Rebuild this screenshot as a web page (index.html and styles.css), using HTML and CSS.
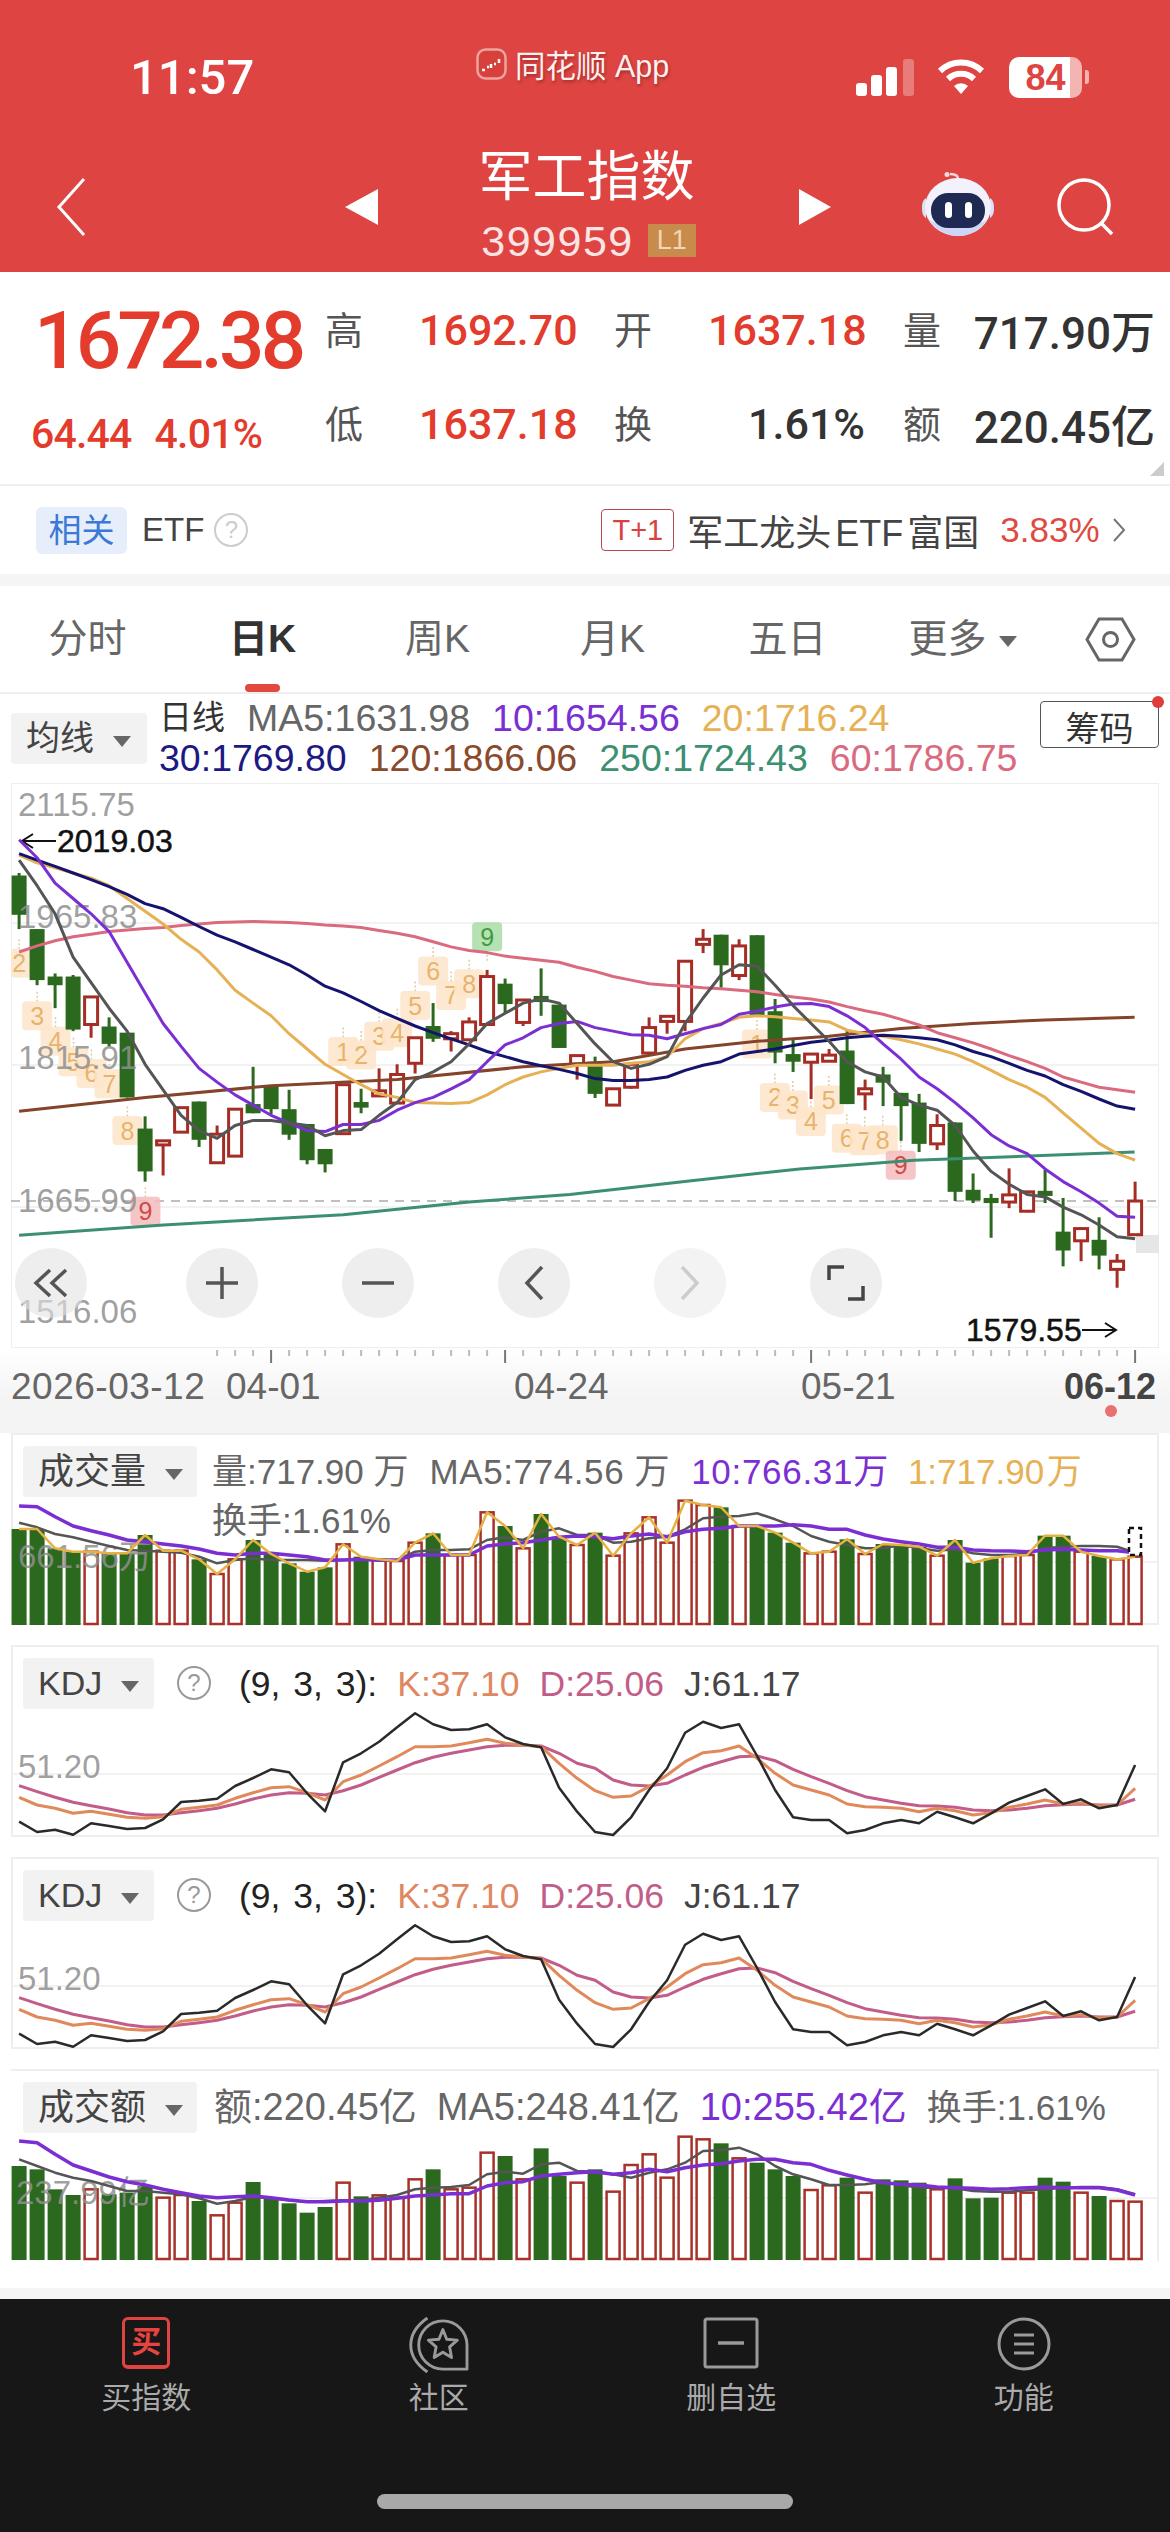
FILE: index.html
```html
<!DOCTYPE html>
<html lang="zh-CN">
<head>
  <meta charset="UTF-8">
  <title>军工指数</title>
  <meta name="viewport" content="width=device-width, initial-scale=1.0">
  <link rel="stylesheet" href="styles.css">
</head>
<body>

  <header class="top">
    <div class="status">
      <span class="time">11:57</span>
      <span class="app-logo">
        <svg width="31" height="32" viewBox="0 0 31 32"><rect x="1.500" y="1.500" width="28" height="29" rx="8" fill="#d8403c" stroke="#eda3a0" stroke-width="2.500"/><path d="M6 22h3M11 19h2M15 20v-4M18 16h2M23 15v-4" stroke="#fff" stroke-width="2.500"/></svg>
      </span>
      <span class="app-name">同花顺 App</span>
      <svg class="signal" width="58" height="37" viewBox="0 0 58 37"><rect x="0" y="24" width="11" height="13" rx="3" fill="#fff"/><rect x="15" y="16" width="11" height="21" rx="3" fill="#fff"/><rect x="30" y="8" width="11" height="29" rx="3" fill="#fff"/><rect x="47" y="0" width="11" height="37" rx="3" fill="#fff" opacity=".3"/></svg>
      <svg class="wifi" width="48" height="36" viewBox="0 0 48 36" fill="none" stroke="#fff" stroke-width="6"><path d="M3 12a30 30 0 0 1 42 0"/><path d="M11 20a19 19 0 0 1 26 0"/><path d="M24 35l-7-8a10 10 0 0 1 14 0z" fill="#fff" stroke="none"/></svg>
      <span class="battery"><span class="battery-num">84</span></span>
      <span class="battery-tip"></span>
    </div>

    <div class="nav">
      <svg class="back" width="30" height="58" viewBox="0 0 30 58" fill="none" stroke="#fff" stroke-width="3"><path d="M28 1L3 29l25 28"/></svg>
      <span class="tri tri-left"></span>
      <div class="title-box">
        <h1>军工指数</h1>
        <div class="code-row"><span class="code">399959</span><span class="level">L1</span></div>
      </div>
      <span class="tri tri-right"></span>
      <svg class="robot" width="74" height="66" viewBox="0 0 74 66">
        <path d="M37 7c0-4-4-5-8-5" fill="none" stroke="#f4dcdc" stroke-width="2.500"/>
        <circle cx="26" cy="2.500" r="2.500" fill="#f4dcdc"/>
        <path d="M1 36c0-5 1-8 4-10v20c-3-2-4-5-4-10zM73 36c0-5-1-8-4-10v20c3-2 4-5 4-10z" fill="#d8e2fa"/>
        <ellipse cx="37" cy="35" rx="33" ry="29" fill="#f3f1fb"/>
        <path d="M7 47c7 11 19 17 30 17s23-6 30-17c-7 5-18 8-30 8S14 52 7 47z" fill="#cfd5f7"/>
        <rect x="10" y="21" width="54" height="35" rx="17" fill="#1f2a52"/>
        <rect x="24" y="30" width="7" height="16" rx="3.500" fill="#fff"/>
        <rect x="44" y="30" width="7" height="16" rx="3.500" fill="#fff"/>
      </svg>
      <svg class="search" width="58" height="58" viewBox="0 0 58 58" fill="none" stroke="#fff" stroke-width="3.500"><circle cx="27" cy="27" r="25"/><path d="M45 46l10 10"/></svg>
    </div>
  </header>

  <section class="quote">
    <div class="price-box">
      <div class="price">1672.38</div>
      <div class="change"><span>64.44</span><span>4.01%</span></div>
    </div>
    <div class="quote-grid">
      <span class="q-label">高</span><span class="q-val up">1692.70</span>
      <span class="q-label">开</span><span class="q-val up">1637.18</span>
      <span class="q-label">量</span><span class="q-val wide">717.90万</span>
      <span class="q-label">低</span><span class="q-val up">1637.18</span>
      <span class="q-label">换</span><span class="q-val">1.61%</span>
      <span class="q-label">额</span><span class="q-val wide">220.45亿</span>
    </div>
    <span class="corner"></span>
  </section>

  <section class="related">
    <span class="rel-tag">相关</span>
    <span class="rel-etf">ETF</span>
    <span class="help help-light">?</span>
    <span class="t-plus">T+1</span>
    <span class="rel-name">军工龙头 ETF 富国</span>
    <span class="rel-pct">3.83%</span>
    <svg class="rel-arrow" width="13" height="24" viewBox="0 0 13 24" fill="none" stroke="#777" stroke-width="2"><path d="M1 1l10 11L1 23"/></svg>
  </section>

  <div class="band"></div>

  <nav class="tabs">
    <a class="tab">分时</a>
    <a class="tab active">日K</a>
    <a class="tab">周K</a>
    <a class="tab">月K</a>
    <a class="tab">五日</a>
    <a class="tab">更多<span class="caret caret-tab"></span></a>
    <svg class="hex" width="51" height="45" viewBox="0 0 51 45" fill="none" stroke="#666" stroke-width="3"><path d="M14 2h23l12 20.500L37 43H14L2 22.500z"/><circle cx="25.500" cy="22.500" r="7"/></svg>
  </nav>

  <section class="ma-head">
    <div class="tag tag-ma">均线<span class="caret"></span></div>
    <div class="ma-lines">
      <div class="ma-line">
        <span class="c-dark ma-title">日线</span><span class="c-grey">MA5:1631.98</span><span class="c-purple">10:1654.56</span><span class="c-yellow">20:1716.24</span>
      </div>
      <div class="ma-line">
        <span class="c-navy">30:1769.80</span><span class="c-brown">120:1866.06</span><span class="c-green">250:1724.43</span><span class="c-pink">60:1786.75</span>
      </div>
    </div>
    <button class="chips">筹码<span class="chips-dot"></span></button>
  </section>

  <section class="main-chart">
    <svg id="candleChart" class="chart-svg" viewBox="11 783 1148 565"></svg>
    <div class="zoom-row">
      <span class="zoom-btn first">
        <svg width="36" height="30" viewBox="0 0 36 30" fill="none" stroke="#555" stroke-width="3.500"><path d="M17 2L3 15l14 13M33 2L19 15l14 13"/></svg>
      </span>
      <span class="zoom-btn">
        <svg width="34" height="34" viewBox="0 0 34 34" fill="none" stroke="#555" stroke-width="3.500"><path d="M17 1v32M1 17h32"/></svg>
      </span>
      <span class="zoom-btn">
        <svg width="34" height="34" viewBox="0 0 34 34" fill="none" stroke="#555" stroke-width="3.500"><path d="M1 17h32"/></svg>
      </span>
      <span class="zoom-btn">
        <svg width="20" height="36" viewBox="0 0 20 36" fill="none" stroke="#555" stroke-width="3.500"><path d="M18 2L3 18l15 16"/></svg>
      </span>
      <span class="zoom-btn off">
        <svg width="20" height="36" viewBox="0 0 20 36" fill="none" stroke="#ccc" stroke-width="3.500"><path d="M2 2l15 16L2 34"/></svg>
      </span>
      <span class="zoom-btn">
        <svg width="38" height="36" viewBox="0 0 38 36" fill="none" stroke="#444" stroke-width="3.500"><path d="M2 15V2h15M36 21v13H21"/></svg>
      </span>
    </div>
  </section>

  <svg id="dateAxis" class="date-axis" viewBox="0 1348 1170 85"></svg>

  <section class="panel">
    <svg id="volChart" class="chart-svg" viewBox="11 1433 1148 192"></svg>
    <div class="panel-head">
      <div class="tag tag-vol">成交量<span class="caret"></span></div>
      <div class="head-text">
        <div class="head-line">
          <span class="c-grey">量:717.90 万</span><span class="c-grey spread-s">MA5:774.56 万</span><span class="c-purple spread-l">10:766.31万</span><span class="c-yellow close-up">1:717.90 万</span>
        </div>
        <div class="head-line"><span class="c-grey">换手:1.61%</span></div>
      </div>
    </div>
  </section>

  <section class="panel">
    <svg id="kdjChart1" class="chart-svg" viewBox="11 1645 1148 192"></svg>
    <div class="panel-head">
      <div class="tag tag-kdj">KDJ<span class="caret"></span></div>
      <span class="help">?</span>
      <div class="head-line kdj-line">
        <span class="c-black kdj-args">(9, 3, 3):</span><span class="c-k">K:37.10</span><span class="c-d">D:25.06</span><span class="c-j">J:61.17</span>
      </div>
    </div>
  </section>

  <section class="panel">
    <svg id="kdjChart2" class="chart-svg" viewBox="11 1645 1148 192"></svg>
    <div class="panel-head">
      <div class="tag tag-kdj">KDJ<span class="caret"></span></div>
      <span class="help">?</span>
      <div class="head-line kdj-line">
        <span class="c-black kdj-args">(9, 3, 3):</span><span class="c-k">K:37.10</span><span class="c-d">D:25.06</span><span class="c-j">J:61.17</span>
      </div>
    </div>
  </section>

  <section class="panel last-panel">
    <svg id="amtChart" class="chart-svg" viewBox="11 2068 1148 192"></svg>
    <div class="panel-head">
      <div class="tag tag-vol">成交额<span class="caret"></span></div>
      <div class="head-line amt-line">
        <span class="c-grey">额:220.45亿</span><span class="c-grey">MA5:248.41亿</span><span class="c-purple">10:255.42亿</span><span class="c-grey amt-turn">换手:1.61%</span>
      </div>
    </div>
  </section>

  <div class="band band-foot"></div>

  <footer class="bottom">
    <div class="bottom-tabs">
      <div class="b-item">
        <span class="buy-icon">买</span>
        <span>买指数</span>
      </div>
      <div class="b-item">
        <svg width="60" height="58" viewBox="0 0 60 58" fill="none" stroke="#9a9a9a" stroke-width="3"><path d="M18 1C-5 17-5 41 18 57"/><path d="M34 54A25 25 0 1 1 59 29V54Z" stroke-linejoin="round"/><path d="M34 13l4 10 11 1-8 7 2 11-9-5.500-9 5.500 2-11-8-7 11-1z" stroke-linejoin="round"/></svg>
        <span>社区</span>
      </div>
      <div class="b-item">
        <svg width="56" height="52" viewBox="0 0 56 52" fill="none" stroke="#9a9a9a" stroke-width="3"><rect x="2" y="2" width="52" height="48" rx="2"/><path d="M15 26h26" stroke-width="3.500"/></svg>
        <span>删自选</span>
      </div>
      <div class="b-item">
        <svg width="54" height="54" viewBox="0 0 54 54" fill="none" stroke="#9a9a9a" stroke-width="3"><circle cx="27" cy="27" r="25"/><path d="M17 18h20M17 27h20M17 36h20"/></svg>
        <span>功能</span>
      </div>
    </div>
    <div class="home-bar"></div>
  </footer>

  <script src="script.js"></script>
</body>
</html>
```

FILE: styles.css
```css
* { box-sizing: border-box; margin: 0; padding: 0; }

body {
  width: 1170px;
  height: 2532px;
  overflow: hidden;
  background: #fff;
  color: #333;
  font-family: "Liberation Sans", "Noto Sans CJK SC", sans-serif;
}

/* red header */
.top { height: 272px; background: #dd4442; color: #fff; }

.status {
  height: 145px;
  padding: 9px 0 0 130px;
  display: flex;
  align-items: center;
}

.time { font-family: Roboto, sans-serif; font-size: 49px; font-weight: 500; width: 346px; }
.app-logo { display: flex; margin-bottom: 26px; }
.app-name {
  font-size: 30.500px;
  width: 341px;
  margin: 0 0 26px 8px;
  color: #fdf0ef;
  white-space: nowrap;
  text-shadow: 1px 2px 3px rgba(90, 20, 20, .45);
}
.wifi { margin-left: 23px; }
.battery {
  width: 73px;
  height: 41px;
  margin-left: 24px;
  background: linear-gradient(90deg, #fff 84%, #f3b4b2 84%);
  border-radius: 10px;
  text-align: center;
}
.battery-num { color: #dd4442; font-size: 36px; font-weight: bold; line-height: 41px; }
.battery-tip { width: 4px; height: 14px; margin-left: 3px; background: #f3b4b2; border-radius: 0 3px 3px 0; }

.nav { height: 127px; padding: 0 0 4px 56px; display: flex; align-items: center; }
.tri { width: 0; height: 0; border-top: 18px solid transparent; border-bottom: 18px solid transparent; }
.tri-left { margin-left: 259px; border-right: 33px solid #fff; }
.tri-right { border-left: 32px solid #fff; }
.title-box { width: 421px; text-align: center; margin-top: -9px; }
h1 { font-size: 54px; font-weight: 400; line-height: 68px; margin-left: -4px; }
.code-row { display: flex; justify-content: center; align-items: center; margin-top: 9px; }
.code { font-size: 43px; line-height: 42px; letter-spacing: 1.500px; color: #fbe4e3; }
.level {
  margin-left: 14px;
  width: 48px;
  height: 33px;
  background: #c98b4c;
  color: #f0d7b8;
  font-size: 27px;
  line-height: 33px;
  text-align: center;
}
.robot { margin-left: 90px; margin-top: -3px; }
.search { margin-left: 62px; }

/* quote block */
.quote { position: relative; height: 212px; display: flex; }
.price-box { width: 326px; padding: 27px 0 0 31px; color: #e33b2c; }
.price {
  font-family: Roboto, sans-serif;
  font-size: 80px;
  font-weight: 500;
  line-height: 84px;
  letter-spacing: -3.800px;
  padding-left: 3px;
}
.change {
  display: flex;
  gap: 23px;
  margin-top: 26px;
  font-family: Roboto, sans-serif;
  font-size: 41px;
  line-height: 50px;
  font-weight: 500;
  letter-spacing: -.8px;
}
.quote-grid {
  padding-top: 11px;
  display: grid;
  grid-template-columns: 95px 194px 95px 194px 69px 179px;
  grid-auto-rows: 94px;
  align-items: center;
}
.q-label { font-size: 38px; color: #555; margin: -6px 0 0 -1px; }
.q-val {
  font-family: Roboto, "Noto Sans CJK SC", sans-serif;
  font-size: 43px;
  font-weight: 500;
  color: #333;
  width: 155px;
  text-align: right;
}
.q-val.up { color: #e33b2c; text-align: left; margin-left: -2px; }
.q-val.wide { width: 183px; margin-left: -1px; font-size: 44px; white-space: nowrap; }
.corner {
  position: absolute;
  right: 6px;
  bottom: 8px;
  border-left: 14px solid transparent;
  border-bottom: 14px solid #ccc;
}

/* related row */
.related {
  height: 90px;
  padding-left: 36px;
  border-top: 2px solid #eee;
  display: flex;
  align-items: center;
}
.rel-tag {
  width: 91px;
  height: 47px;
  background: #e7eefb;
  color: #3b78d8;
  border-radius: 6px;
  font-size: 33px;
  line-height: 47px;
  text-align: center;
}
.rel-etf { margin-left: 15px; font-size: 33px; color: #444; }
.help {
  width: 34px;
  height: 34px;
  border: 2px solid #999;
  border-radius: 50%;
  color: #999;
  font-size: 24px;
  line-height: 30px;
  text-align: center;
}
.help-light { margin-left: 10px; border-color: #ccc; color: #ccc; }
.t-plus {
  margin-left: 353px;
  width: 73px;
  height: 42px;
  border: 1px solid #b5494d;
  border-radius: 4px;
  color: #d9433f;
  font-size: 29px;
  line-height: 40px;
  text-align: center;
}
.rel-name { margin-left: 13px; font-size: 36px; color: #444; white-space: nowrap; word-spacing: -6px; }
.rel-pct { margin-left: 21px; font-size: 35px; color: #e04a3f; }
.rel-arrow { margin-left: 13px; }

.band { height: 12px; background: #f5f5f5; }

/* period tabs */
.tabs { height: 108px; border-bottom: 2px solid #eee; display: flex; align-items: center; }
.tab {
  position: relative;
  width: 175px;
  height: 106px;
  line-height: 106px;
  text-align: center;
  font-size: 39px;
  color: #666;
}
.tab.active { color: #333; font-weight: bold; }
.tab.active::after {
  content: "";
  position: absolute;
  left: 70px;
  bottom: 0;
  width: 35px;
  height: 8px;
  background: #e04a3f;
  border-radius: 4px;
}
.hex { margin-left: 35px; }

.caret {
  display: inline-block;
  margin-left: 19px;
  border-left: 9px solid transparent;
  border-right: 9px solid transparent;
  border-top: 11px solid #666;
  vertical-align: middle;
}
.caret-tab { margin-left: 12px; }

/* moving average legend */
.ma-head { height: 89px; padding: 0 11px; display: flex; }
.tag {
  flex: none;
  height: 51px;
  background: #f2f2f2;
  border-radius: 4px;
  white-space: nowrap;
  line-height: 51px;
  color: #444;
  font-size: 34px;
}
.tag-ma { width: 136px; margin-top: 19px; padding-left: 15px; }
.tag-vol { width: 174px; padding-left: 15px; font-size: 36px; }
.tag-kdj { width: 131px; padding-left: 15px; }
.ma-lines { margin: 4px 0 0 12px; }
.ma-line { display: flex; gap: 22px; font-size: 37.500px; line-height: 40px; white-space: nowrap; }
.ma-title { font-size: 33px; }

.c-dark { color: #333; }
.c-black { color: #222; }
.c-grey { color: #666; }
.c-purple { color: #7b2fd3; }
.c-yellow { color: #e6b155; }
.c-navy { color: #1c1a82; }
.c-brown { color: #8a4a2c; }
.c-green { color: #3d8f72; }
.c-pink { color: #da6b7f; }
.c-k { color: #df8760; }
.c-d { color: #c25c88; }
.c-j { color: #444; }

.chips {
  position: relative;
  margin: 7px 0 0 auto;
  flex: none;
  width: 119px;
  height: 47px;
  background: #fff;
  border: 1px solid #555;
  border-radius: 4px;
  font-family: inherit;
  font-size: 34px;
  color: #333;
}
.chips-dot {
  position: absolute;
  top: -6px;
  right: -6px;
  width: 12px;
  height: 12px;
  background: #e03c3c;
  border-radius: 50%;
}

/* charts */
.main-chart {
  position: relative;
  margin: 0 11px;
  height: 565px;
  box-shadow: inset 0 0 0 1px #eee;
}
.chart-svg { position: absolute; left: 0; top: 0; width: 100%; height: 100%; overflow: visible; }
.zoom-row { position: absolute; left: 4px; top: 465px; display: flex; gap: 84px; }
.zoom-btn {
  width: 72px;
  height: 70px;
  background: rgba(226, 226, 226, .6);
  border-radius: 50%;
  display: flex;
  align-items: center;
  justify-content: center;
}
.zoom-btn.first { margin-right: 15px; }
.zoom-btn.off { background: rgba(235, 235, 235, .6); }

.date-axis { display: block; width: 1170px; height: 85px; background: linear-gradient(#fff, #f4f4f4 60%); }

.axis-label { font-size: 33px; fill: #8f8f8f; fill-opacity: .85; }
.axis-mark { font-size: 32px; fill: #111; stroke: #111; stroke-width: .5px; }
.date-label { font-size: 37px; fill: #666; }
.date-label.first { letter-spacing: .5px; }
.date-label.now { fill: #444; font-weight: bold; font-size: 36px; }
.pin-num { font-size: 25px; text-anchor: middle; }

.panel {
  position: relative;
  margin: 0 11px 20px;
  height: 192px;
  box-shadow: inset 0 0 0 2px #eee;
}
.panel.last-panel { margin-bottom: 27px; box-shadow: inset 0 2px 0 #eee, inset -2px 0 0 #eee; }
.panel-head { position: relative; padding: 13px 0 0 12px; display: flex; align-items: flex-start; }
.head-text { margin: 1px 0 0 15px; }
.head-line { display: flex; gap: 21px; font-size: 35px; line-height: 49px; white-space: nowrap; }
.spread-s { letter-spacing: .6px; }
.spread-l { letter-spacing: .7px; }
.close-up { word-spacing: -7px; margin-left: -2px; }
.panel-head .help { margin: 8px 0 0 23px; }
.kdj-line { margin: 2px 0 0 28px; font-size: 35.500px; gap: 20px; }
.kdj-args { word-spacing: 3px; }
.amt-line { margin: 1px 0 0 17px; font-size: 38px; gap: 20px; }
.amt-turn { font-size: 35px; }

.band-foot { height: 11px; }

/* bottom bar */
.bottom { height: 234px; background: #171717; color: #aaa; }
.bottom-tabs { height: 195px; padding-top: 18px; display: grid; grid-template-columns: repeat(4, 1fr); }
.b-item {
  height: 100px;
  display: flex;
  flex-direction: column;
  align-items: center;
  justify-content: space-between;
  font-size: 30px;
}
.buy-icon {
  width: 48px;
  height: 52px;
  border: 3px solid #dd4442;
  border-bottom-width: 4px;
  border-radius: 6px;
  color: #e8443f;
  font-size: 30px;
  font-weight: bold;
  line-height: 44px;
  text-align: center;
}
.home-bar { width: 416px; height: 15px; margin: 0 auto; background: #a9a9a9; border-radius: 8px; }
```

FILE: script.js
```js
// all coordinates are page pixels; the zoom arrays below were read at x*2.613, y*1.96
var mx = function (v) { return v * 600 / 1568; };
var my = function (v) { return 600 + v * 800 / 1568; };
var cx = function (i) { return 19.1 + 18 * i; };

var UP = "#a52d25", DOWN = "#2b691f";

// [body top, body bottom, wick top, wick bottom, colour]
var candles = [
  [540,617,535,645,"g"],[645,745,645,755,"g"],[738,755,732,800,"g"],[738,842,735,845,"g"],[778,832,778,858,"r"],
  [836,870,818,875,"g"],[848,975,848,975,"g"],[1036,1120,1012,1140,"g"],[1060,1068,1060,1128,"r"],[995,1043,995,1043,"r"],
  [983,1058,983,1072,"g"],[1047,1103,1030,1103,"r"],[998,1090,998,1090,"r"],[988,1006,915,1006,"g"],[952,998,952,1008,"g"],
  [998,1048,960,1058,"g"],[1027,1098,1027,1106,"g"],[1076,1106,1076,1122,"g"],[950,1046,950,1046,"r"],[984,995,958,1006,"g"],
  [962,972,918,972,"r"],[930,986,910,986,"r"],[858,908,858,928,"r"],[835,860,790,866,"g"],[850,860,845,885,"r"],
  [827,862,818,862,"r"],[738,832,725,832,"r"],[752,792,742,810,"g"],[784,828,784,835,"r"],[776,788,722,815,"g"],
  [793,878,793,878,"g"],[893,910,893,940,"r"],[905,968,895,976,"g"],[958,990,958,990,"r"],[910,955,910,958,"r"],
  [838,888,818,888,"r"],[816,826,816,850,"r"],[708,826,708,845,"r"],[665,675,645,692,"r"],[656,716,656,760,"g"],
  [678,736,665,745,"r"],[657,815,657,815,"g"],[806,887,782,908,"g"],[890,905,860,925,"g"],[890,906,890,978,"r"],
  [892,904,880,904,"r"],[883,988,845,988,"g"],[958,968,940,1000,"r"],[930,946,915,992,"g"],[966,992,966,1060,"g"],
  [985,1066,968,1082,"g"],[1030,1066,1008,1078,"r"],[1024,1160,1024,1178,"g"],[1156,1177,1124,1182,"g"],[1172,1182,1164,1250,"g"],
  [1166,1180,1114,1192,"r"],[1160,1198,1160,1200,"r"],[1158,1168,1116,1182,"g"],[1238,1275,1172,1306,"g"],[1232,1256,1232,1296,"r"],
  [1254,1285,1210,1312,"g"],[1296,1312,1282,1348,"r"],[1178,1244,1140,1244,"r"]
];

var maGrey = [510,560,615,700,750,800,845,910,960,1010,1040,1055,1030,1020,1020,1025,1030,1050,1040,1038,1010,985,940,925,905,870,830,810,790,782,790,830,870,905,918,910,895,830,780,735,715,718,755,795,830,865,905,925,935,975,990,1000,1030,1080,1120,1145,1165,1170,1190,1205,1225,1248,1252];
var maPurple = [470,505,555,585,615,650,710,770,830,875,918,945,970,990,1010,1025,1040,1042,1028,1028,1020,1000,985,975,958,940,905,872,858,838,830,826,838,845,852,853,860,850,840,832,812,806,798,792,791,797,815,838,870,900,935,958,985,1015,1048,1070,1085,1115,1140,1160,1182,1208,1210];
var maYellow = [500,515,525,535,545,560,585,610,635,665,690,725,765,790,815,850,880,910,930,950,968,975,985,986,987,985,970,950,935,925,918,912,912,912,908,905,895,860,840,830,818,815,817,820,823,827,843,850,855,862,870,880,890,905,922,940,955,975,1005,1035,1065,1085,1098];
var maNavy = [497,510,522,535,548,562,577,595,605,622,640,657,670,685,700,715,735,757,770,787,805,820,835,848,860,872,885,895,905,913,920,928,938,942,942,940,935,922,912,905,890,885,880,873,867,863,858,855,853,855,858,862,872,885,895,908,922,933,950,963,978,992,998];
var maPink = [690,678,668,660,655,650,647,644,642,638,635,632,631,630,631,632,634,637,639,642,648,653,660,670,680,687,691,698,702,706,710,720,728,738,745,752,755,757,760,762,765,768,773,778,782,788,797,805,812,822,833,848,858,868,880,893,905,918,935,945,955,960,965];
// the two slow averages are nearly straight: [x, y] anchors
var maBrown = [[50,1002],[380,975],[709,952],[1038,940],[1367,915],[1602,905],[1790,880],[1978,865],[2166,855],[2354,840],[2542,830],[2730,823],[2965,818]];
var maGreen = [[50,1245],[427,1225],[897,1205],[1226,1180],[1489,1165],[1789,1140],[2089,1115],[2389,1098],[2689,1090],[2965,1082]];

// [x, y, number, kind]
var pins = [
  [50,712,2,"o"],[97,815,3,"o"],[145,865,4,"o"],[192,905,5,"o"],[239,928,6,"o"],[286,948,7,"o"],[333,1040,8,"o"],[380,1198,9,"r"],
  [897,885,1,"o"],[944,892,2,"o"],[991,855,3,"o"],[1038,848,4,"o"],[1085,795,5,"o"],[1132,727,6,"o"],[1179,775,7,"o"],[1226,752,8,"o"],[1273,660,9,"g"],
  [1978,870,1,"o"],[2025,975,2,"o"],[2072,990,3,"o"],[2119,1022,4,"o"],[2166,980,5,"o"],[2213,1055,6,"o"],[2260,1060,7,"o"],[2307,1058,8,"o"],[2354,1108,9,"r"]
];
var pinStyle = {
  o: ["#fde5ca", "#e9b36c"],
  r: ["#f5bcbc", "#cf4a4a"],
  g: ["#a9dca6", "#3f9a45"]
};

// bars: top edge read at y*3, page y = base + top/3
var volTops = [387,387,445,455,455,460,460,405,452,452,478,522,478,420,462,490,515,502,433,470,478,483,428,400,465,465,337,378,445,342,410,435,398,467,400,352,428,302,315,322,378,378,398,428,460,455,418,462,432,435,440,467,420,488,475,468,465,407,407,455,468,478,470];
var volPurple = [318,320,350,378,392,405,420,425,432,438,447,460,465,460,460,465,470,480,480,478,480,480,465,465,465,465,438,432,428,420,412,408,410,416,408,402,410,395,388,385,378,378,378,374,378,388,388,405,417,425,432,442,442,450,452,453,455,450,448,450,452,452,458];
var volGrey = [368,382,402,412,425,438,450,452,455,458,470,490,480,475,480,480,480,482,480,478,482,480,455,450,450,448,420,412,420,395,385,405,405,428,425,415,410,388,355,350,348,340,358,378,408,425,435,445,445,435,445,452,448,460,465,465,462,445,440,438,438,440,458];

var amtTops = [375,385,445,462,445,460,455,435,470,462,480,523,485,423,470,487,515,498,425,466,463,470,415,385,445,440,335,345,415,322,405,425,385,452,372,340,410,287,295,307,352,365,385,405,447,433,410,455,415,418,425,445,412,472,470,455,455,410,422,455,465,480,482];
var amtPurple = [300,305,340,372,390,408,422,432,445,455,465,470,467,465,470,477,482,482,480,480,478,472,465,462,458,458,435,425,422,405,400,395,392,400,395,385,392,380,372,368,360,355,355,365,370,388,402,415,425,430,432,438,440,442,445,443,440,438,440,440,440,447,462];
var amtGrey = [355,375,395,410,420,435,450,450,455,460,472,488,480,468,472,478,482,480,478,478,470,462,445,440,438,432,400,392,398,370,365,390,392,400,410,395,385,365,330,328,320,340,375,400,415,432,432,430,422,432,440,440,442,450,452,452,448,445,440,438,438,445,460];

var kdjJ = [1265,1296,1289,1304,1270,1278,1287,1284,1258,1206,1202,1196,1158,1134,1108,1117,1180,1234,1087,1060,1025,982,940,973,990,988,973,1012,1032,1042,1163,1235,1296,1305,1252,1170,1105,998,965,984,973,1068,1170,1252,1260,1260,1300,1290,1270,1260,1270,1235,1252,1270,1240,1208,1188,1168,1212,1198,1225,1215,1095];
var kdjK = [1192,1215,1225,1240,1234,1243,1252,1255,1250,1228,1222,1215,1195,1178,1163,1160,1178,1200,1145,1125,1098,1070,1040,1040,1038,1028,1018,1030,1035,1040,1090,1135,1172,1192,1188,1160,1125,1085,1058,1052,1038,1075,1120,1155,1170,1185,1212,1220,1222,1225,1235,1225,1232,1245,1238,1222,1212,1200,1212,1208,1218,1215,1165];
var kdjD = [1157,1175,1192,1207,1217,1227,1238,1245,1245,1238,1232,1225,1212,1197,1185,1178,1180,1185,1172,1155,1132,1110,1088,1072,1060,1050,1040,1036,1036,1038,1060,1090,1105,1140,1155,1158,1150,1125,1102,1085,1070,1068,1082,1108,1130,1150,1172,1190,1200,1210,1217,1218,1222,1230,1232,1230,1225,1217,1214,1212,1215,1215,1198];

function polyline(points, colour, width) {
  return '<polyline fill="none" stroke-linejoin="round" stroke="' + colour + '" stroke-width="' + width + '" points="' + points.join(" ") + '"/>';
}

function series(values, toY, colour, width) {
  var pts = values.map(function (v, i) { return cx(i) + "," + toY(v).toFixed(1); });
  return polyline(pts, colour, width);
}

function hline(y, colour, x1, x2, dash) {
  return '<line x1="' + x1 + '" x2="' + x2 + '" y1="' + y + '" y2="' + y + '" stroke="' + colour + '" stroke-width="1.500"' + (dash ? ' stroke-dasharray="' + dash + '"' : "") + '/>';
}

function label(x, y, text, cls) {
  return '<text x="' + x + '" y="' + y + '" class="' + cls + '">' + text + '</text>';
}

function drawMain() {
  var out = "";
  [923, 1065, 1207].forEach(function (y) { out += hline(y, "#eee", 11, 1159); });
  out += hline(1201, "#aaa", 11, 1159, "9 7");

  out += '<rect x="1136" y="1235" width="23" height="18" fill="#e6e6e6"/>';

  pins.forEach(function (p) {
    var x = mx(p[0]), y = my(p[1]), st = pinStyle[p[3]];
    var rx = Math.max(x - 15, 11);
    var stemTop = p[3] === "g" ? y + 14 : y - 24;
    out += '<line x1="' + x + '" x2="' + x + '" y1="' + stemTop + '" y2="' + (stemTop + 10) + '" stroke="#e2c9a8" stroke-width="1.500" stroke-dasharray="2 2"/>';
    out += '<rect x="' + rx + '" y="' + (y - 14.5) + '" width="' + (x + 15 - rx) + '" height="29" rx="4" fill="' + st[0] + '" opacity=".85"/>';
    out += '<text x="' + x + '" y="' + (y + 9) + '" class="pin-num" fill="' + st[1] + '">' + p[2] + '</text>';
  });

  candles.forEach(function (c, i) {
    var x = cx(i), colour = c[4] === "r" ? UP : DOWN;
    var top = my(c[0]), bottom = my(c[1]);
    out += '<line x1="' + x + '" x2="' + x + '" y1="' + my(c[2]) + '" y2="' + my(c[3]) + '" stroke="' + colour + '" stroke-width="3"/>';
    if (c[4] === "r") {
      out += '<rect x="' + (x - 6.500) + '" y="' + top + '" width="13" height="' + (bottom - top) + '" fill="#fff" stroke="' + colour + '" stroke-width="3"/>';
    } else {
      out += '<rect x="' + (x - 7.500) + '" y="' + top + '" width="15" height="' + (bottom - top) + '" fill="' + colour + '"/>';
    }
  });

  out += label(18, 816, "2115.75", "axis-label");
  out += label(18, 928, "1965.83", "axis-label");
  out += label(18, 1069, "1815.91", "axis-label");
  out += label(18, 1212, "1665.99", "axis-label");
  out += label(18, 1323, "1516.06", "axis-label");
  // long arrows beside the extreme prices
  out += '<path d="M56 841H22M33 834l-11 7 11 7" fill="none" stroke="#111" stroke-width="2"/>';
  out += label(57, 852, "2019.03", "axis-mark");
  out += label(966, 1341, "1579.55", "axis-mark");
  out += '<path d="M1082 1330h34M1105 1323l11 7-11 7" fill="none" stroke="#111" stroke-width="2"/>';

  var anchors = function (list) { return list.map(function (p) { return mx(p[0]).toFixed(1) + "," + my(p[1]).toFixed(1); }); };
  out += polyline(anchors(maGreen), "#3d8f72", 3);
  out += polyline(anchors(maBrown), "#84432a", 3);
  out += series(maPink, my, "#da6b7f", 3);
  out += series(maYellow, my, "#e6b155", 3);
  out += series(maNavy, my, "#14146e", 3);
  out += series(maPurple, my, "#7b2fd3", 3);
  out += series(maGrey, my, "#555", 3);
  document.getElementById("candleChart").innerHTML = out;
}

function drawBars(tops, toY, baseY, colours) {
  var out = "";
  tops.forEach(function (t, i) {
    var x = cx(i), top = toY(t);
    if (colours[i] === "r") {
      out += '<rect x="' + (x - 6.500) + '" y="' + top + '" width="13" height="' + (baseY - top - 1) + '" fill="#fff" stroke="#a8322a" stroke-width="2.500"/>';
    } else {
      out += '<rect x="' + (x - 7.500) + '" y="' + top + '" width="15" height="' + (baseY - top) + '" fill="#2b691f"/>';
    }
  });
  return out;
}

function drawVolume() {
  var toY = function (v) { return 1400 + v / 3; };
  var colours = candles.map(function (c) { return c[4]; });
  var out = hline(1562, "#eee", 11, 1159);
  out += drawBars(volTops, toY, 1625, colours);
  out += label(18, 1568, "661.56万", "axis-label");
  out += series(volGrey, toY, "#555", 2.500);
  out += series(volPurple, toY, "#7b2fd3", 3.500);
  out += series(volTops, toY, "#e6b143", 2.500);
  out += '<rect x="1129" y="1528" width="12" height="27" fill="#fff" stroke="#111" stroke-width="2.500" stroke-dasharray="5 4"/>';
  document.getElementById("volChart").innerHTML = out;
}

function drawKdj(id) {
  var toY = function (v) { return 1400 + v / 3; };
  var out = hline(1774, "#eee", 11, 1159);
  out += label(18, 1778, "51.20", "axis-label");
  out += series(kdjD, toY, "#c25c88", 3);
  out += series(kdjK, toY, "#e08a5c", 3);
  out += series(kdjJ, toY, "#2a2a2a", 2.500);
  document.getElementById(id).innerHTML = out;
}

function drawAmount() {
  var toY = function (v) { return 2040 + v / 3; };
  var colours = candles.map(function (c) { return c[4]; });
  var out = hline(2197, "#eee", 11, 1159);
  out += drawBars(amtTops, toY, 2259, colours);
  out += label(16, 2203, "237.99亿", "axis-label");
  out += series(amtGrey, toY, "#555", 2.500);
  out += series(amtPurple, toY, "#7b2fd3", 3.500);
  document.getElementById("amtChart").innerHTML = out;
}

function drawDates() {
  var out = "";
  for (var i = 11; i < candles.length; i++) {
    var big = i === 14 || i === 27 || i === 44 || i === 62;
    out += '<line x1="' + cx(i) + '" x2="' + cx(i) + '" y1="1350" y2="' + (big ? 1363 : 1356) + '" stroke="' + (big ? "#777" : "#bbb") + '" stroke-width="2"/>';
  }
  out += label(11, 1399, "2026-03-12", "date-label first");
  out += label(226, 1399, "04-01", "date-label");
  out += label(514, 1399, "04-24", "date-label");
  out += label(801, 1399, "05-21", "date-label");
  out += label(1064, 1399, "06-12", "date-label now");
  out += '<circle cx="1111" cy="1411" r="6" fill="#e87070"/>';
  document.getElementById("dateAxis").innerHTML = out;
}

drawMain();
drawDates();
drawVolume();
drawKdj("kdjChart1");
drawKdj("kdjChart2");
drawAmount();
```
